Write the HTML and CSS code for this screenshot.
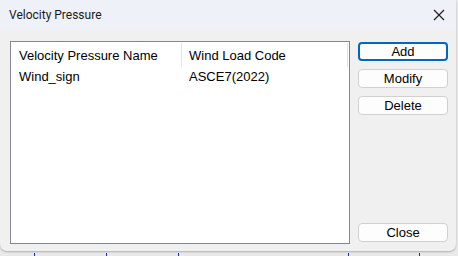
FILE: index.html
```html
<!DOCTYPE html>
<html>
<head>
<meta charset="utf-8">
<link rel="stylesheet" href="styles.css">
</head>
<body>
<div class="backdrop">
  <span class="tick t1"></span><span class="tick t2"></span><span class="tick t3"></span><span class="tick t4"></span><span class="tick t5"></span>
</div>
<div class="dialog">
  <div class="titlebar">
    <span class="title">Velocity Pressure</span>
    <svg class="close-x" width="12" height="12" viewBox="0 0 12 12"><path d="M1 1 L11 11 M11 1 L1 11" stroke="#1a1a1a" stroke-width="1.1" fill="none"/></svg>
  </div>
  <div class="content">
    <div class="listbox">
      <div class="row header">
        <div class="cell c1">Velocity Pressure Name</div>
        <div class="cell c2">Wind Load Code</div>
      </div>
      <div class="row">
        <div class="cell c1">Wind_sign</div>
        <div class="cell c2">ASCE7(2022)</div>
      </div>
    </div>
    <div class="buttons">
      <button class="btn default">Add</button>
      <button class="btn">Modify</button>
      <button class="btn">Delete</button>
      <button class="btn close">Close</button>
    </div>
  </div>
</div>
</body>
</html>
```
FILE: styles.css
```css
html, body {
  margin: 0;
  padding: 0;
}
body {
  width: 458px;
  height: 256px;
  background: #e9e9e9;
  position: relative;
  overflow: hidden;
  font-family: "Liberation Sans", Arial, sans-serif;
}
.backdrop {
  position: absolute;
  left: 0;
  top: 0;
  width: 458px;
  height: 256px;
}
.tick {
  position: absolute;
  top: 253px;
  width: 1px;
  height: 3px;
  background: #1c2bb0;
}
.t1 { left: 34px; }
.t2 { left: 106px; }
.t3 { left: 178px; }
.t4 { left: 348px; }
.t5 { left: 419px; }
.dialog {
  position: relative;
  width: 456px;
  height: 251px;
  background: #f0f0f0;
  border-radius: 0 0 7px 7px;
  box-shadow: 0 1px 2px rgba(0,0,0,0.25);
  display: flex;
  flex-direction: column;
  overflow: hidden;
}
.titlebar {
  height: 30px;
  flex: none;
  background: #eef1f8;
  display: flex;
  align-items: center;
  justify-content: space-between;
  padding: 0 10px 0 9px;
}
.title {
  font-family: Roboto, "Liberation Sans", sans-serif;
  font-size: 12px;
  color: #1a1a1a;
  margin-top: -1px;
}
.close-x {
  margin-right: 1px;
}
.content {
  flex: 1;
  display: flex;
  padding: 11px 0 7px 10px;
}
.listbox {
  width: 338px;
  height: 201px;
  background: #ffffff;
  border: 1px solid #828790;
}
.row {
  display: flex;
  height: 19px;
  align-items: center;
  font-size: 13px;
  color: #000;
}
.header {
  height: 24px;
  margin-top: 1px;
}
.cell {
  padding-left: 8px;
  height: 100%;
  display: flex;
  align-items: center;
  box-sizing: border-box;
}
.c1 {
  width: 171px;
}
.c2 {
  width: 166px;
  padding-left: 7px;
}
.header .cell {
  border-right: 1px solid #e5e5e5;
}
.buttons {
  margin-left: 8px;
  display: flex;
  flex-direction: column;
  gap: 8px;
  padding-top: 1px;
}
.btn {
  width: 90px;
  height: 19px;
  box-sizing: border-box;
  border: 1px solid #d0d0d0;
  border-radius: 4px;
  background: #fdfdfd;
  font-family: "Liberation Sans", Arial, sans-serif;
  font-size: 13px;
  color: #000;
  padding: 0;
  line-height: 16px;
}
.btn.default {
  border: 2px solid #0067c0;
  line-height: 14px;
}
.btn.close {
  margin-top: auto;
  margin-bottom: 2px;
}
```
